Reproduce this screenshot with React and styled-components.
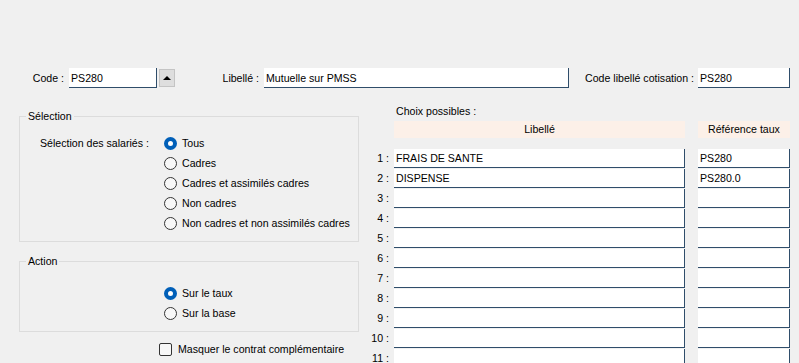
import React from 'react'
import styled, { createGlobalStyle } from 'styled-components'

const GlobalStyle = createGlobalStyle`
  html, body {
    margin: 0;
    padding: 0;
    background: #f0f0f0;
  }
  body {
    font-family: "Liberation Sans", Arial, sans-serif;
    font-size: 10.6px;
    color: #000;
    overflow: hidden;
  }
`

const Page = styled.div`
  width: 799px;
  height: 363px;
  overflow: hidden;
  padding-top: 68px;
  box-sizing: border-box;
`

const TopRow = styled.div`
  display: flex;
  align-items: center;
  height: 20px;
`

const Label = styled.div`
  width: ${p => p.$w}px;
  text-align: right;
  padding-right: ${p => p.$pr || 5}px;
  box-sizing: border-box;
  white-space: nowrap;
`

const Field = styled.div`
  width: ${p => p.$w}px;
  height: ${p => p.$h || 19}px;
  box-sizing: border-box;
  background: #fff;
  border-right: 1px solid #2f4d6a;
  border-bottom: 1px solid #2f4d6a;
  padding-left: 2px;
  display: flex;
  align-items: center;
  white-space: nowrap;
  overflow: hidden;
`

const SpinButton = styled.div`
  width: 16px;
  height: 18px;
  margin-left: 2px;
  box-sizing: border-box;
  background: #dedede;
  border: 1px solid #c4c4c4;
  display: flex;
  align-items: center;
  justify-content: center;

  &::after {
    content: '';
    border-left: 4px solid transparent;
    border-right: 4px solid transparent;
    border-bottom: 4px solid #000;
  }
`

const Main = styled.div`
  display: flex;
  margin-top: 16px;
  align-items: flex-start;
`

const LeftCol = styled.div`
  width: 340px;
  margin-left: 19px;
  margin-top: 6px;
`

const Group = styled.fieldset`
  margin: 0 0 ${p => p.$mb || 0}px 0;
  padding: ${p => p.$pt}px 0 8px 0;
  border: 1px solid #dcdcdc;
  min-inline-size: 0;

  legend {
    margin-left: 6px;
    padding: 0 2px;
    line-height: 13px;
  }
`

const OptionGrid = styled.div`
  display: grid;
  grid-template-columns: 124px 1fr;
  padding-left: 20px;
`

const OptionLabel = styled.div`
  height: 20px;
  line-height: 20px;
`

const Options = styled.div`
  display: flex;
  flex-direction: column;
`

const OptionRow = styled.div`
  display: flex;
  align-items: center;
  height: 20px;
  gap: 5px;
`

const RadioCircle = styled.span`
  width: 13px;
  height: 13px;
  box-sizing: border-box;
  border-radius: 50%;
  border: ${p => (p.$checked ? '4px solid #005fb8' : '1px solid #333')};
  background: ${p => (p.$checked ? '#fff' : '#f7f7f7')};
`

const CheckRow = styled.div`
  display: flex;
  align-items: center;
  gap: 6px;
  height: 20px;
  margin-top: 7px;
  padding-left: 140px;
`

const CheckBox = styled.span`
  width: 13px;
  height: 13px;
  box-sizing: border-box;
  border: 1px solid #333;
  border-radius: 2px;
  background: #f7f7f7;
`

const RightCol = styled.div`
  margin-left: 10px;
  display: flex;
  flex-direction: column;
`

const Caption = styled.div`
  padding-left: 27px;
  height: 15px;
  line-height: 15px;
`

const HeaderRow = styled.div`
  display: flex;
  margin-top: 2px;
  padding-left: 25px;
  margin-bottom: 11px;
`

const HeaderCell = styled.div`
  width: ${p => p.$w}px;
  margin-left: ${p => p.$ml || 0}px;
  height: 17px;
  line-height: 17px;
  background: #fcf0e8;
  text-align: center;
`

const Row = styled.div`
  display: flex;
  height: 20px;
`

const RowNum = styled.div`
  width: 25px;
  padding-right: 5px;
  box-sizing: border-box;
  text-align: right;
  line-height: 19px;
  white-space: nowrap;
`

const Spacer = styled.div`
  width: ${p => p.$w}px;
`

const Radio = ({ checked, children }) => (
  <OptionRow>
    <RadioCircle $checked={checked} />
    <span>{children}</span>
  </OptionRow>
)

const rows = [
  ['FRAIS DE SANTE', 'PS280'],
  ['DISPENSE', 'PS280.0'],
  ['', ''], ['', ''], ['', ''], ['', ''], ['', ''],
  ['', ''], ['', ''], ['', ''], ['', ''],
]

export default function App() {
  return (
    <Page>
      <GlobalStyle />
      <TopRow>
        <Label $w={69}>Code :</Label>
        <Field $w={88} $h={20}>PS280</Field>
        <SpinButton />
        <Label $w={89}>Libellé :</Label>
        <Field $w={305} $h={20}>Mutuelle sur PMSS</Field>
        <Label $w={129} $pr={4}>Code libellé cotisation :</Label>
        <Field $w={92} $h={20}>PS280</Field>
      </TopRow>

      <Main>
        <LeftCol>
          <Group $pt={10} $mb={13}>
            <legend>Sélection</legend>
            <OptionGrid>
              <OptionLabel>Sélection des salariés :</OptionLabel>
              <Options>
                <Radio checked>Tous</Radio>
                <Radio>Cadres</Radio>
                <Radio>Cadres et assimilés cadres</Radio>
                <Radio>Non cadres</Radio>
                <Radio>Non cadres et non assimilés cadres</Radio>
              </Options>
            </OptionGrid>
          </Group>
          <Group $pt={15}>
            <legend>Action</legend>
            <OptionGrid>
              <div />
              <Options>
                <Radio checked>Sur le taux</Radio>
                <Radio>Sur la base</Radio>
              </Options>
            </OptionGrid>
          </Group>
          <CheckRow>
            <CheckBox />
            <span>Masquer le contrat complémentaire</span>
          </CheckRow>
        </LeftCol>

        <RightCol>
          <Caption>Choix possibles :</Caption>
          <HeaderRow>
            <HeaderCell $w={291}>Libellé</HeaderCell>
            <HeaderCell $w={92} $ml={13}>Référence taux</HeaderCell>
          </HeaderRow>
          {rows.map(([lib, ref], i) => (
            <Row key={i}>
              <RowNum>{i + 1} :</RowNum>
              <Field $w={291}>{lib}</Field>
              <Spacer $w={13} />
              <Field $w={92}>{ref}</Field>
            </Row>
          ))}
        </RightCol>
      </Main>
    </Page>
  )
}
